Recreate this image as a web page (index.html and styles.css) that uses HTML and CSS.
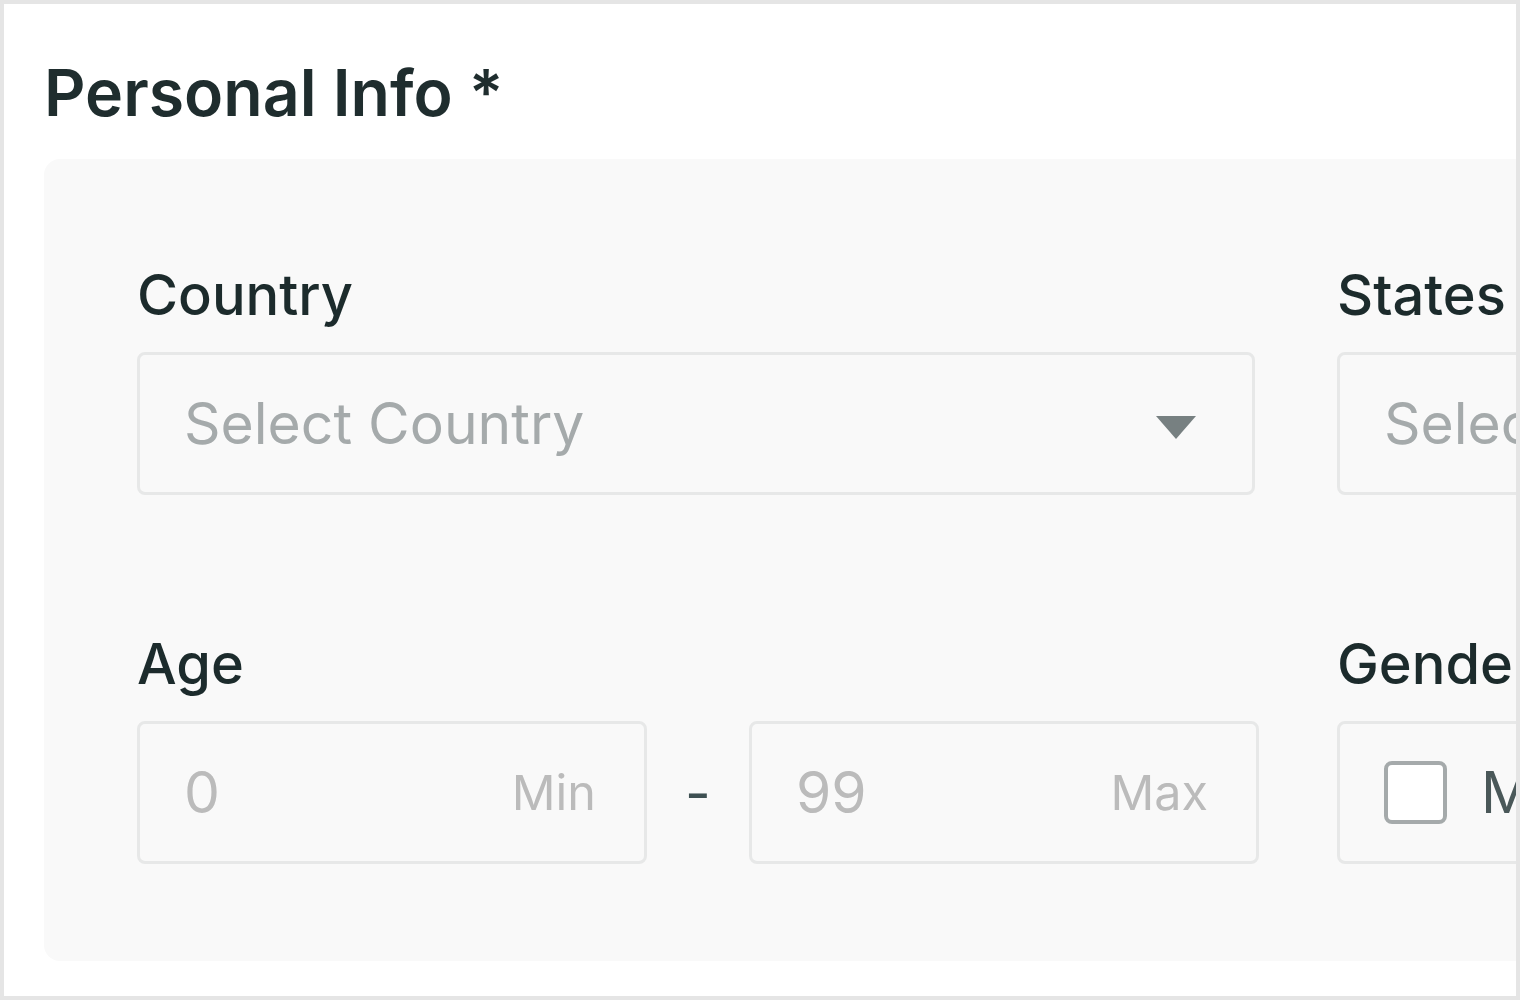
FILE: index.html
```html
<!DOCTYPE html>
<html lang="en">
<head>
<meta charset="utf-8">
<title>Personal Info</title>
<link rel="stylesheet" href="styles.css">
</head>
<body>
<div class="frame">
  <h1 class="title">Personal Info *</h1>
  <div class="panel">
    <div class="field">
      <div class="label">Country</div>
      <div class="box select">
        <span class="placeholder">Select Country</span>
        <svg class="caret" width="40" height="24" viewBox="0 0 40 24"><path d="M0 0H40L20 23Z" fill="#778081"/></svg>
      </div>
    </div>
    <div class="field">
      <div class="label">States</div>
      <div class="box select">
        <span class="placeholder">Select State</span>
        <svg class="caret" width="40" height="24" viewBox="0 0 40 24"><path d="M0 0H40L20 23Z" fill="#778081"/></svg>
      </div>
    </div>
    <div class="field">
      <div class="label">Age</div>
      <div class="range">
        <div class="box num">
          <span class="value">0</span>
          <span class="unit">Min</span>
        </div>
        <div class="dash">-</div>
        <div class="box num">
          <span class="value">99</span>
          <span class="unit">Max</span>
        </div>
      </div>
    </div>
    <div class="field">
      <div class="label">Gender</div>
      <div class="box check">
        <span class="checkbox"></span>
        <span class="option">Male</span>
        <span class="checkbox second"></span>
        <span class="option">Female</span>
      </div>
    </div>
  </div>
</div>
</body>
</html>
```

FILE: styles.css
```css
html, body {
  margin: 0;
  padding: 0;
  background: #ffffff;
}

body {
  font-family: Inter, "Noto Sans", "Liberation Sans", sans-serif;
}

.frame {
  box-sizing: border-box;
  width: 1520px;
  height: 1000px;
  border: 4px solid #e5e5e5;
  background: #ffffff;
  overflow: hidden;
  padding: 0 0 0 40px;
}

.title {
  margin: 50px 0 27px 0;
  font-size: 64.4px;
  line-height: 78px;
  font-weight: 600;
  color: #1f2d2e;
  white-space: nowrap;
}

.panel {
  width: max-content;
  box-sizing: border-box;
  background: #f9f9f9;
  border-radius: 16px;
  padding: 102px 300px 97px 93px;
  display: grid;
  grid-template-columns: 1118px 1118px;
  column-gap: 82px;
  row-gap: 135px;
}

.label {
  font-size: 56px;
  line-height: 68px;
  font-weight: 500;
  color: #1c2b2c;
  margin-bottom: 23px;
  white-space: nowrap;
}

.box {
  box-sizing: border-box;
  height: 143px;
  border: 3px solid #e7e8e8;
  border-radius: 8px;
  display: flex;
  align-items: center;
  padding: 0 56px 0 44px;
  font-size: 57px;
  line-height: 68px;
  white-space: nowrap;
}

.select {
  justify-content: space-between;
}

.placeholder {
  color: #a5aaab;
}

.caret {
  display: block;
  margin-top: 8px;
}

.range {
  display: flex;
  align-items: center;
  width: 1122px;
}

.num {
  width: 510px;
  justify-content: space-between;
  padding-right: 48px;
}

.value {
  color: #bbbbbb;
}

.unit {
  color: #bbbbbb;
  font-size: 48.5px;
}

.dash {
  width: 102px;
  text-align: center;
  font-size: 56px;
  line-height: 68px;
  color: #3e5052;
}

.check {
  justify-content: flex-start;
}

.checkbox {
  box-sizing: border-box;
  width: 63px;
  height: 63px;
  border: 4px solid #a5aaab;
  border-radius: 8px;
  background: #ffffff;
  flex: none;
}

.checkbox.second {
  margin-left: 80px;
}

.option {
  margin-left: 34px;
  color: #4a5859;
}
```
